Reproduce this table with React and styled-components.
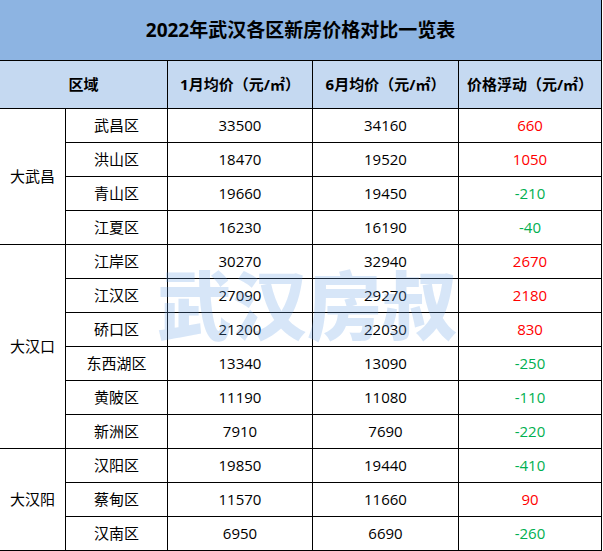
import React from "react";
import styled, { createGlobalStyle } from "styled-components";

const Global = createGlobalStyle`
  html, body { margin: 0; padding: 0; background: #ffffff; }
  body { font-family: "Open Sans", "Noto Sans CJK SC", sans-serif; }
`;

const Wrap = styled.div`
  position: relative;
  width: 603px;
  height: 551px;
  overflow: hidden;
`;

const Sheet = styled.div`
  display: grid;
  grid-template-columns: 65px 101px 144px 145px 142px;
  grid-template-rows: 60px 47px repeat(13, 33px);
  gap: 1px;
  padding: 0 1px 1px 0;
  width: fit-content;
  background: #000000;
`;

const BaseCell = styled.div`
  display: flex;
  align-items: center;
  justify-content: center;
  background: #ffffff;
  color: #000000;
  font-size: 15px;
  line-height: 1;
  white-space: nowrap;
`;

const TitleCell = styled(BaseCell)`
  grid-column: 1 / -1;
  background: #8db4e2;
  font-size: 19px;
  font-weight: 700;
`;

const HeadCell = styled(BaseCell)`
  grid-column: span ${(p) => p.$span || 1};
  background: #c5d9f1;
  font-weight: 700;
`;

const GroupCell = styled(BaseCell)`
  grid-column: 1;
  grid-row: span ${(p) => p.$rows};
`;

const Cell = styled(BaseCell)`
  color: ${(p) => (p.$tone === "up" ? "#ff0000" : p.$tone === "down" ? "#00b050" : "#000000")};
`;

const Watermark = styled.div`
  position: absolute;
  left: 157px;
  top: 264px;
  font-family: "Noto Sans CJK SC", sans-serif;
  font-weight: 900;
  font-size: 75px;
  line-height: 1;
  color: rgba(100, 160, 228, 0.26);
  pointer-events: none;
  white-space: nowrap;
`;

const groups = [
  {
    name: "大武昌",
    rows: [
      ["武昌区", 33500, 34160, 660],
      ["洪山区", 18470, 19520, 1050],
      ["青山区", 19660, 19450, -210],
      ["江夏区", 16230, 16190, -40],
    ],
  },
  {
    name: "大汉口",
    rows: [
      ["江岸区", 30270, 32940, 2670],
      ["江汉区", 27090, 29270, 2180],
      ["硚口区", 21200, 22030, 830],
      ["东西湖区", 13340, 13090, -250],
      ["黄陂区", 11190, 11080, -110],
      ["新洲区", 7910, 7690, -220],
    ],
  },
  {
    name: "大汉阳",
    rows: [
      ["汉阳区", 19850, 19440, -410],
      ["蔡甸区", 11570, 11660, 90],
      ["汉南区", 6950, 6690, -260],
    ],
  },
];

export default function App() {
  return (
    <Wrap>
      <Global />
      <Sheet>
        <TitleCell>2022年武汉各区新房价格对比一览表</TitleCell>
        <HeadCell $span={2}>区域</HeadCell>
        <HeadCell>1月均价（元/㎡）</HeadCell>
        <HeadCell>6月均价（元/㎡）</HeadCell>
        <HeadCell>价格浮动（元/㎡）</HeadCell>
        {groups.map((g) => (
          <React.Fragment key={g.name}>
            <GroupCell $rows={g.rows.length}>{g.name}</GroupCell>
            {g.rows.map(([d, a, b, c]) => (
              <React.Fragment key={d}>
                <Cell>{d}</Cell>
                <Cell>{a}</Cell>
                <Cell>{b}</Cell>
                <Cell $tone={c > 0 ? "up" : "down"}>{c}</Cell>
              </React.Fragment>
            ))}
          </React.Fragment>
        ))}
      </Sheet>
      <Watermark>武汉房叔</Watermark>
    </Wrap>
  );
}
